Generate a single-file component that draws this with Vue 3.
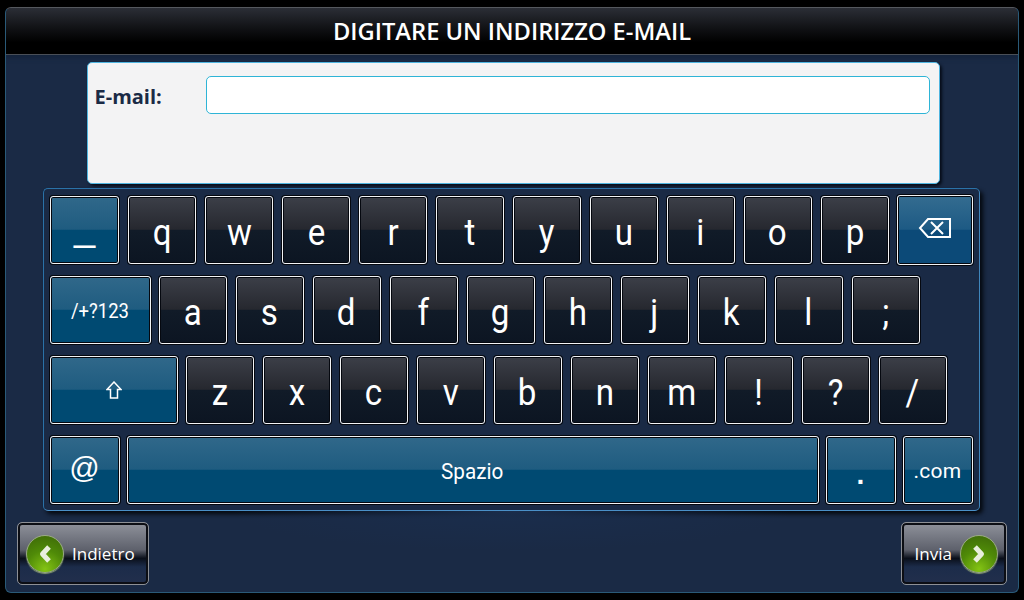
<template>
  <div class="screen">
    <div class="frame">
      <header class="title">DIGITARE UN INDIRIZZO E-MAIL</header>

      <div class="form-panel">
        <label class="field-label">E-mail:</label>
        <div class="field-input"></div>
      </div>

      <div class="keyboard">
        <div v-for="(row, i) in rows" :key="i" class="key-row">
          <div
            v-for="k in row"
            :key="k.label"
            class="key"
            :class="[k.cls, k.blue ? 'blue' : 'dark']"
          >
            <svg v-if="k.icon === 'back'" class="ico-back" viewBox="0 0 34 22" width="34" height="22">
              <path d="M32 2H10L2 11l8 9h22z" fill="none" stroke="#fff" stroke-width="2" />
              <path d="M13 5l12 12M25 5L13 17" fill="none" stroke="#fff" stroke-width="2" />
            </svg>
            <svg v-else-if="k.icon === 'shift'" viewBox="0 0 16 18" width="16" height="18">
              <path d="M8 1l7 7.500h-3.500V17h-7V8.500H1z" fill="none" stroke="#fff" stroke-width="1.500" />
            </svg>
            <span v-else>{{ k.label }}</span>
          </div>
        </div>
      </div>

      <div class="nav-row">
        <button class="nav-btn back">
          <span class="orb">
            <svg viewBox="0 0 18 22" width="18" height="22"><path d="M13 4L6.500 11l6.500 7" fill="none" stroke="#e8eedd" stroke-width="5" stroke-linejoin="round" /></svg>
          </span>
          <span>Indietro</span>
        </button>
        <button class="nav-btn next">
          <span>Invia</span>
          <span class="orb">
            <svg viewBox="0 0 18 22" width="18" height="22"><path d="M5 4l6.500 7L5 18" fill="none" stroke="#e8eedd" stroke-width="5" stroke-linejoin="round" /></svg>
          </span>
        </button>
      </div>
    </div>
  </div>
</template>

<script setup>
const letters = (s) => s.split("").map((c) => ({ label: c }));

const rows = [
  [
    { label: "_", blue: true, cls: "wide70 under" },
    ...letters("qwertyuiop"),
    { label: "del", blue: true, icon: "back", cls: "del" },
  ],
  [{ label: "/+?123", blue: true, cls: "sym" }, ...letters("asdfghjkl;")],
  [{ label: "shift", blue: true, icon: "shift", cls: "shift" }, ...letters("zxcvbnm!?/")],
  [
    { label: "@", blue: true, cls: "wide70 at" },
    { label: "Spazio", blue: true, cls: "space" },
    { label: ".", blue: true, cls: "wide70 dot" },
    { label: ".com", blue: true, cls: "wide70 com" },
  ],
];
</script>

<style>
html,
body {
  margin: 0;
  background: #000;
}
</style>

<style scoped>
.screen {
  width: 1024px;
  height: 600px;
  padding: 7px 5px 7px 5px;
  box-sizing: border-box;
  background: #000;
  font-family: Roboto, "Liberation Sans", sans-serif;
}

.frame {
  height: 586px;
  box-sizing: border-box;
  border: 1px solid #2a5a78;
  border-top-color: #55585e;
  border-radius: 6px;
  background: #1a2a45;
  overflow: hidden;
  display: flex;
  flex-direction: column;
  align-items: center;
}

.title {
  align-self: stretch;
  height: 47px;
  box-sizing: border-box;
  background: linear-gradient(#2b2e36 0, #101114 45%, #000 75%, #000 100%);
  border-bottom: 1px solid #4a4f57;
  box-shadow: 0 3px 4px #14233b;
  color: #fff;
  font-family: "Open Sans", sans-serif;
  font-weight: 600;
  font-size: 23.700px;
  line-height: 46px;
  text-align: center;
}

.form-panel {
  width: 853px;
  height: 122px;
  margin-top: 7px;
  margin-left: 2px;
  box-sizing: border-box;
  background: #f3f3f4;
  border: 1px solid #4fb5e0;
  border-radius: 5px;
  box-shadow: 2px 2px 3px #060c18;
  display: flex;
  align-items: flex-start;
  padding: 13px 9px 0 7px;
}

.field-label {
  width: 111px;
  font-family: "Open Sans", sans-serif;
  font-weight: 700;
  font-size: 20px;
  line-height: 44px;
  margin-top: -1px;
  color: #1a2a45;
}

.field-input {
  flex: 1;
  height: 38px;
  box-sizing: border-box;
  background: #fff;
  border: 1px solid #2eb4d6;
  border-radius: 5px;
}

.keyboard {
  width: 937px;
  height: 323px;
  margin-top: 4px;
  margin-right: 2px;
  box-sizing: border-box;
  border: 1px solid #2a72a8;
  border-right-color: #3f86bc;
  border-bottom-color: #4a90c8;
  border-radius: 5px;
  background: #1a2a45;
  box-shadow: 3px 3px 4px #05090f;
  padding: 7px 6px;
  display: flex;
  flex-direction: column;
  gap: 12px;
}

.key-row {
  display: flex;
  gap: 9px;
}

.key {
  width: 68px;
  height: 68px;
  box-sizing: border-box;
  border: 1px solid #f2f3f5;
  border-radius: 3px;
  box-shadow: 0 0 0 1px #05080f, inset 0 0 0 1px #05080f;
  display: flex;
  align-items: center;
  justify-content: center;
  color: #fff;
  font-size: 36px;
}

.key span {
  position: relative;
  top: 3px;
  transform: scaleX(0.92);
}

.dark {
  background: linear-gradient(#3c3f48 0, #26282f 49%, #111b28 50%, #0c1522 100%);
}

.blue {
  background: linear-gradient(#30688a 0, #1f5c80 49%, #004a72 50%, #004a72 100%);
}

.wide70 {
  width: 70px;
}

.under {
  font-family: "Liberation Sans", sans-serif;
  font-size: 38px;
}

.under span {
  top: -3px;
  transform: none;
}

.dot {
  font-family: "Liberation Sans", sans-serif;
  font-weight: 700;
  font-size: 28px;
}

.dot span {
  top: 5px;
  transform: none;
}

.del {
  width: 76px;
  height: 70px;
  margin: -1px 0 -1px -1px;
  background: linear-gradient(#346c90 0, #1d5a84 49%, #0c4a78 50%, #0c4a78 100%);
}

.del svg {
  position: relative;
  top: -2px;
}

.sym {
  width: 101px;
  font-size: 21px;
  margin-right: -1px;
}

.sym span {
  top: 1px;
  transform: scaleX(0.88);
}

.shift {
  width: 128px;
  margin-right: -1px;
}

.at {
  font-family: "Liberation Sans", sans-serif;
  font-size: 30px;
}

.at span {
  top: -2px;
  transform: none;
}

.space {
  width: 692px;
  font-size: 22px;
  margin: 0 -2px;
}

.space span {
  top: 1px;
  transform: scaleX(0.94);
}

.com {
  font-size: 21px;
  letter-spacing: 0.3px;
  margin-left: -2px;
}

.com span {
  top: 1px;
  transform: none;
}

.nav-row {
  align-self: stretch;
  display: flex;
  justify-content: space-between;
  padding: 11px 11px 0;
  background: radial-gradient(ellipse 280px 40px at 50% 0, #1a2d4c, transparent);
}

.nav-btn {
  height: 63px;
  box-sizing: border-box;
  border: 1px solid #8d9096;
  border-radius: 5px;
  box-shadow: inset 0 0 0 2px #0c0e14;
  background: linear-gradient(#8f929b 0, #5e616c 44%, #0a0f1a 58%, #1c2c4a 72%, #222f4c 100%);
  color: #fff;
  font-family: "Open Sans", sans-serif;
  font-size: 17px;
  display: flex;
  align-items: center;
  gap: 8px;
  padding: 0 8px;
}

.back {
  width: 132px;
}

.next {
  width: 106px;
  justify-content: flex-end;
}

.orb {
  width: 38px;
  height: 38px;
  border-radius: 50%;
  border: 1px solid #9aad82;
  box-sizing: border-box;
  background: radial-gradient(circle at 50% 92%, #84c414 0, #4f8a08 50%, #3c6608 100%);
  box-shadow: 0 1px 1px #8a9c74;
  display: flex;
  align-items: center;
  justify-content: center;
}
</style>
